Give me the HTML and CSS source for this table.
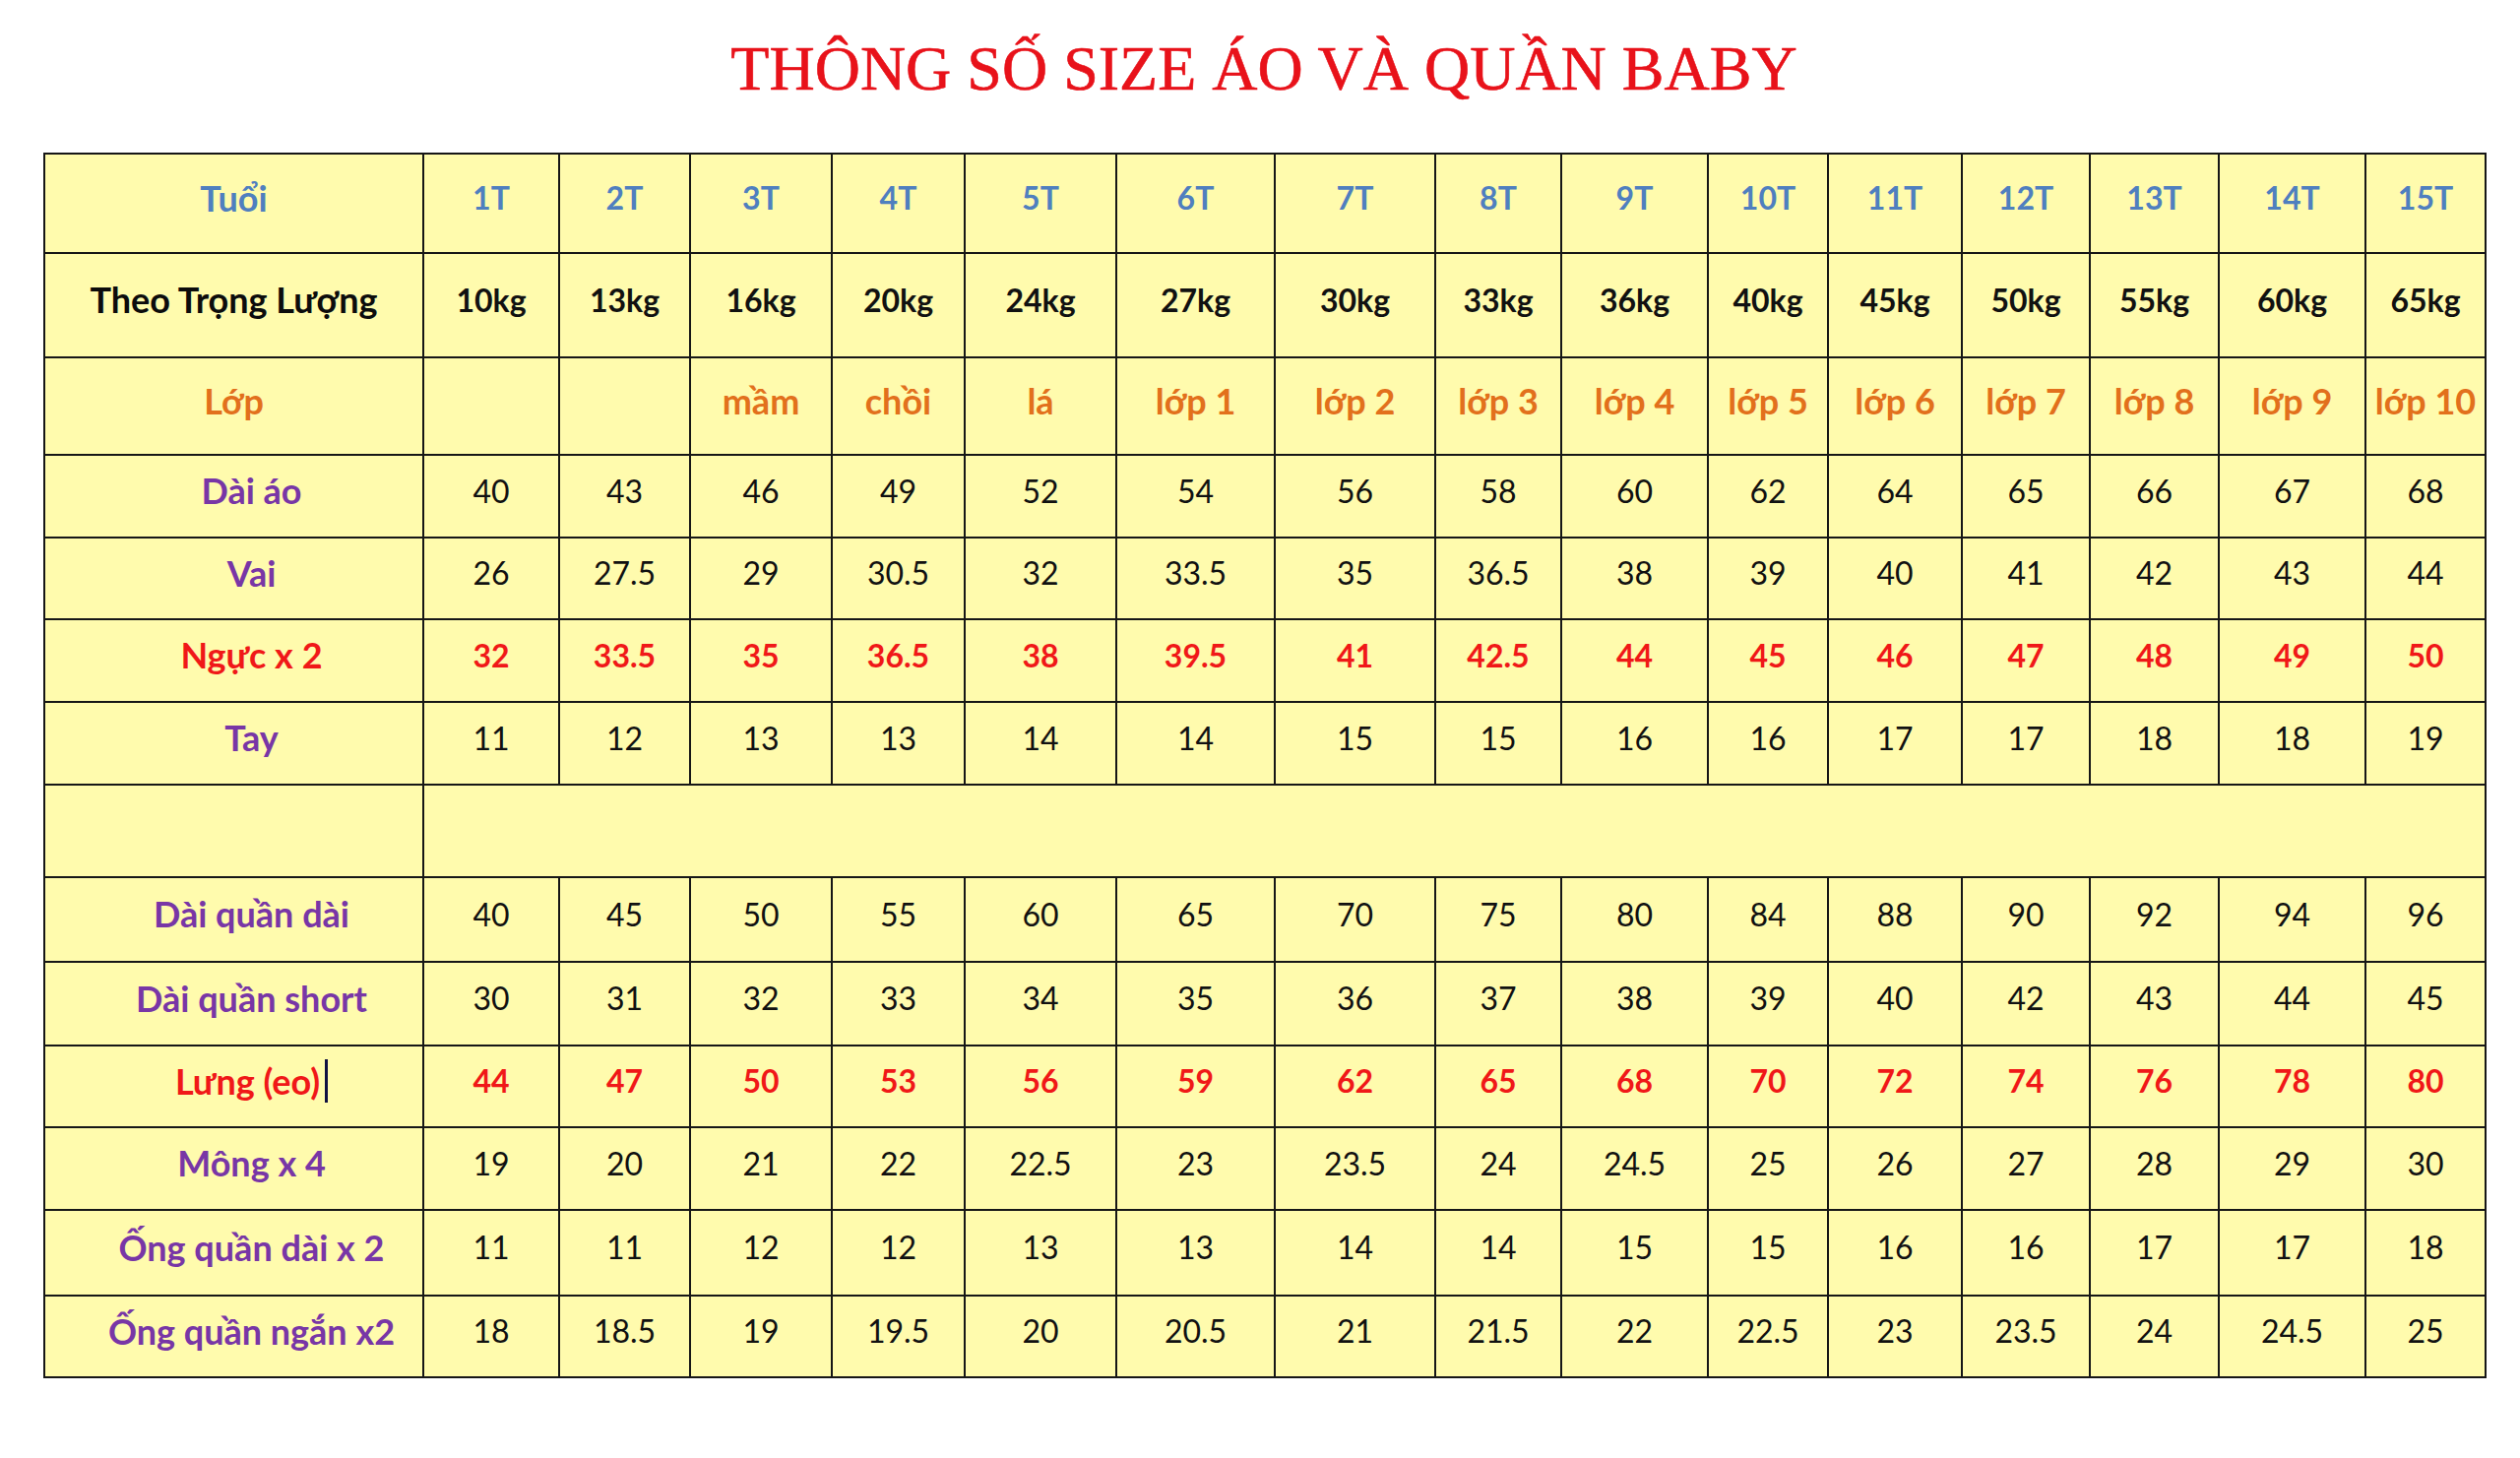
FILE: index.html
```html
<!DOCTYPE html>
<html lang="vi">
<head>
<meta charset="utf-8">
<title>Thông số size áo và quần baby</title>
<link rel="stylesheet" href="styles.css">
</head>
<body>
<h1 class="title">THÔNG SỐ SIZE ÁO VÀ QUẦN BABY</h1>
<div class="chart">
  <div class="c lbl blue top">Tuổi</div>
  <div class="c blue b">1T</div><div class="c blue b">2T</div><div class="c blue b">3T</div><div class="c blue b">4T</div><div class="c blue b">5T</div><div class="c blue b">6T</div><div class="c blue b">7T</div><div class="c blue b">8T</div><div class="c blue b">9T</div><div class="c blue b">10T</div><div class="c blue b">11T</div><div class="c blue b">12T</div><div class="c blue b">13T</div><div class="c blue b">14T</div><div class="c blue b">15T</div>

  <div class="c lbl black top">Theo Trọng Lượng</div>
  <div class="c b">10kg</div><div class="c b">13kg</div><div class="c b">16kg</div><div class="c b">20kg</div><div class="c b">24kg</div><div class="c b">27kg</div><div class="c b">30kg</div><div class="c b">33kg</div><div class="c b">36kg</div><div class="c b">40kg</div><div class="c b">45kg</div><div class="c b">50kg</div><div class="c b">55kg</div><div class="c b">60kg</div><div class="c b">65kg</div>

  <div class="c lbl orange top">Lớp</div>
  <div class="c orange"></div><div class="c orange"></div><div class="c orange">mầm</div><div class="c orange">chồi</div><div class="c orange">lá</div><div class="c orange">lớp 1</div><div class="c orange">lớp 2</div><div class="c orange">lớp 3</div><div class="c orange">lớp 4</div><div class="c orange">lớp 5</div><div class="c orange">lớp 6</div><div class="c orange">lớp 7</div><div class="c orange">lớp 8</div><div class="c orange">lớp 9</div><div class="c orange">lớp 10</div>

  <div class="c lbl purple">Dài áo</div>
  <div class="c">40</div><div class="c">43</div><div class="c">46</div><div class="c">49</div><div class="c">52</div><div class="c">54</div><div class="c">56</div><div class="c">58</div><div class="c">60</div><div class="c">62</div><div class="c">64</div><div class="c">65</div><div class="c">66</div><div class="c">67</div><div class="c">68</div>

  <div class="c lbl purple">Vai</div>
  <div class="c">26</div><div class="c">27.5</div><div class="c">29</div><div class="c">30.5</div><div class="c">32</div><div class="c">33.5</div><div class="c">35</div><div class="c">36.5</div><div class="c">38</div><div class="c">39</div><div class="c">40</div><div class="c">41</div><div class="c">42</div><div class="c">43</div><div class="c">44</div>

  <div class="c lbl red">Ngực x 2</div>
  <div class="c red b">32</div><div class="c red b">33.5</div><div class="c red b">35</div><div class="c red b">36.5</div><div class="c red b">38</div><div class="c red b">39.5</div><div class="c red b">41</div><div class="c red b">42.5</div><div class="c red b">44</div><div class="c red b">45</div><div class="c red b">46</div><div class="c red b">47</div><div class="c red b">48</div><div class="c red b">49</div><div class="c red b">50</div>

  <div class="c lbl purple">Tay</div>
  <div class="c">11</div><div class="c">12</div><div class="c">13</div><div class="c">13</div><div class="c">14</div><div class="c">14</div><div class="c">15</div><div class="c">15</div><div class="c">16</div><div class="c">16</div><div class="c">17</div><div class="c">17</div><div class="c">18</div><div class="c">18</div><div class="c">19</div>

  <div class="c lbl"></div>
  <div class="c span"></div>

  <div class="c lbl purple">Dài quần dài</div>
  <div class="c">40</div><div class="c">45</div><div class="c">50</div><div class="c">55</div><div class="c">60</div><div class="c">65</div><div class="c">70</div><div class="c">75</div><div class="c">80</div><div class="c">84</div><div class="c">88</div><div class="c">90</div><div class="c">92</div><div class="c">94</div><div class="c">96</div>

  <div class="c lbl purple">Dài quần short</div>
  <div class="c">30</div><div class="c">31</div><div class="c">32</div><div class="c">33</div><div class="c">34</div><div class="c">35</div><div class="c">36</div><div class="c">37</div><div class="c">38</div><div class="c">39</div><div class="c">40</div><div class="c">42</div><div class="c">43</div><div class="c">44</div><div class="c">45</div>

  <div class="c lbl red">Lưng (eo)<span class="caret"></span></div>
  <div class="c red b">44</div><div class="c red b">47</div><div class="c red b">50</div><div class="c red b">53</div><div class="c red b">56</div><div class="c red b">59</div><div class="c red b">62</div><div class="c red b">65</div><div class="c red b">68</div><div class="c red b">70</div><div class="c red b">72</div><div class="c red b">74</div><div class="c red b">76</div><div class="c red b">78</div><div class="c red b">80</div>

  <div class="c lbl purple">Mông x 4</div>
  <div class="c">19</div><div class="c">20</div><div class="c">21</div><div class="c">22</div><div class="c">22.5</div><div class="c">23</div><div class="c">23.5</div><div class="c">24</div><div class="c">24.5</div><div class="c">25</div><div class="c">26</div><div class="c">27</div><div class="c">28</div><div class="c">29</div><div class="c">30</div>

  <div class="c lbl purple">Ống quần dài x 2</div>
  <div class="c">11</div><div class="c">11</div><div class="c">12</div><div class="c">12</div><div class="c">13</div><div class="c">13</div><div class="c">14</div><div class="c">14</div><div class="c">15</div><div class="c">15</div><div class="c">16</div><div class="c">16</div><div class="c">17</div><div class="c">17</div><div class="c">18</div>

  <div class="c lbl purple">Ống quần ngắn x2</div>
  <div class="c">18</div><div class="c">18.5</div><div class="c">19</div><div class="c">19.5</div><div class="c">20</div><div class="c">20.5</div><div class="c">21</div><div class="c">21.5</div><div class="c">22</div><div class="c">22.5</div><div class="c">23</div><div class="c">23.5</div><div class="c">24</div><div class="c">24.5</div><div class="c">25</div>
</div>
</body>
</html>
```

FILE: styles.css
```css
html, body {
  margin: 0;
  padding: 0;
  background: #ffffff;
}

.title {
  margin: 0;
  padding-top: 38px;
  padding-left: 8px;
  height: 64px;
  margin-bottom: 53px;
  font-family: "Liberation Serif", "Times New Roman", serif;
  font-weight: normal;
  font-size: 64px;
  line-height: 64px;
  color: #e8121a;
  -webkit-text-stroke: 0.6px #e8121a;
  text-align: center;
  white-space: nowrap;
}

.chart {
  margin-left: 44px;
  width: 2482px;
  box-sizing: border-box;
  display: grid;
  grid-template-columns: 383px 136px 131px 142px 133px 152px 159px 161px 126px 147px 120px 134px 128px 129px 147px 120px;
  grid-template-rows: 99px 104px 97px 82px 81px 82px 82px 92px 84px 83px 81px 82px 85px 81px;
  gap: 2px;
  padding: 2px;
  background: #161616;
  font-family: Lato, "Noto Sans", sans-serif;
  font-size: 32px;
  color: #111111;
}

.c {
  background: #fffbad;
  display: flex;
  align-items: center;
  justify-content: center;
  padding-bottom: 12px;
  box-sizing: border-box;
  white-space: nowrap;
}

.lbl {
  font-weight: bold;
  font-size: 36px;
  padding-left: 36px;
}

.lbl.top {
  padding-left: 0;
}

.span {
  grid-column: span 15;
}

.b { font-weight: bold; }

.blue { color: #4f7fbf; font-weight: bold; }
.black { color: #0c0c0c; }
.orange { color: #e2701c; font-weight: bold; font-size: 36px; }
.purple { color: #7836a6; }
.red { color: #f01818; }

.caret {
  display: inline-block;
  width: 3px;
  height: 44px;
  margin-left: 5px;
  background: #101040;
  vertical-align: middle;
}
```
